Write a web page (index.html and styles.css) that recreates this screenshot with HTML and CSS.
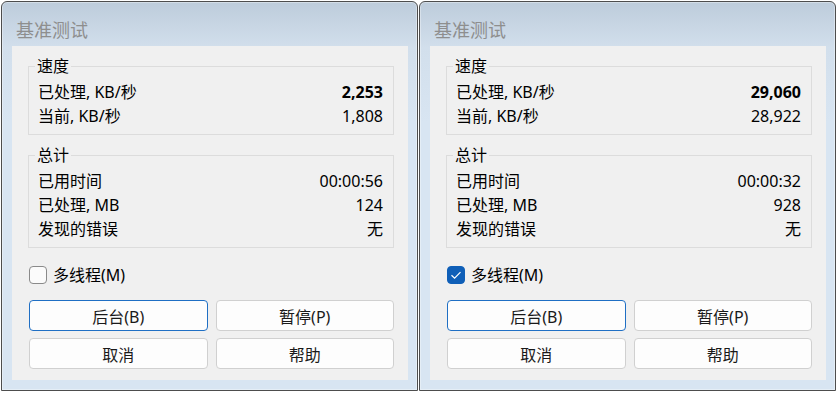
FILE: index.html
```html
<!DOCTYPE html>
<html lang="zh-CN">
<head>
    <meta charset="UTF-8">
    <meta name="viewport" content="width=device-width, initial-scale=1.0">
    <title>基准测试</title>
    <link rel="stylesheet" href="styles.css">
</head>
<body>
    <div class="desktop">
        <div class="window">
            <div class="title">基准测试</div>
            <div class="panel">
                <fieldset class="group">
                    <legend>速度</legend>
                    <div class="row"><span>已处理, KB/秒</span><b>2,253</b></div>
                    <div class="row"><span>当前, KB/秒</span><span>1,808</span></div>
                </fieldset>
                <fieldset class="group">
                    <legend>总计</legend>
                    <div class="row"><span>已用时间</span><span>00:00:56</span></div>
                    <div class="row"><span>已处理, MB</span><span>124</span></div>
                    <div class="row"><span>发现的错误</span><span>无</span></div>
                </fieldset>
                <label class="check"><span class="box"></span>多线程(M)</label>
                <div class="buttons">
                    <button class="default">后台(B)</button>
                    <button>暂停(P)</button>
                    <button>取消</button>
                    <button>帮助</button>
                </div>
            </div>
        </div>

        <div class="window">
            <div class="title">基准测试</div>
            <div class="panel">
                <fieldset class="group">
                    <legend>速度</legend>
                    <div class="row"><span>已处理, KB/秒</span><b>29,060</b></div>
                    <div class="row"><span>当前, KB/秒</span><span>28,922</span></div>
                </fieldset>
                <fieldset class="group">
                    <legend>总计</legend>
                    <div class="row"><span>已用时间</span><span>00:00:32</span></div>
                    <div class="row"><span>已处理, MB</span><span>928</span></div>
                    <div class="row"><span>发现的错误</span><span>无</span></div>
                </fieldset>
                <label class="check"><span class="box checked"><svg width="18" height="18" viewBox="0 0 18 18"><path d="M4.5 9.2 L7.6 12.2 L13.5 6.2" fill="none" stroke="#fff" stroke-width="1.2"/></svg></span>多线程(M)</label>
                <div class="buttons">
                    <button class="default">后台(B)</button>
                    <button>暂停(P)</button>
                    <button>取消</button>
                    <button>帮助</button>
                </div>
            </div>
        </div>
    </div>
</body>
</html>
```

FILE: styles.css
```css
body { margin: 0; background: #fff; font-family: "Noto Sans", "Noto Sans CJK SC", sans-serif; font-size: 16px; color: #000; }
.desktop { display: flex; gap: 1px; padding: 1px; }
.window { width: 417px; height: 390px; box-sizing: border-box; border: 1px solid #4d4d4d; border-radius: 6px 6px 0 0; padding: 0 9px 0 10px; background: linear-gradient(#bdccdb 0, #d2dfec 46px, #d8e5f2 120px); box-shadow: inset 0 0 0 1px rgba(255,255,255,.35); }
.title { height: 44px; display: flex; align-items: flex-end; padding: 0 0 4px 4px; box-sizing: border-box; line-height: 24px; font-size: 18px; color: #8e8e8e; }
.panel { display: flow-root; background: #f0f0f0; padding: 0 14px 11px 16px; }
.group { margin: 10px 0 0; padding: 4px 10px 6px 9px; border: 1px solid #dcdcdc; min-width: 0; }
.group legend { padding: 0 2px; margin-left: -3px; line-height: 20px; }
.row { display: flex; justify-content: space-between; line-height: 24px; height: 24px; }
.row b { font-weight: bold; }
.check { display: flex; align-items: center; gap: 6px; margin-top: 15px; height: 24px; line-height: 24px; }
.box { width: 18px; height: 18px; box-sizing: border-box; border: 1px solid #8a8a8a; border-radius: 4px; background: #fbfbfb; margin-left: 1px; }
.box.checked { border-color: #0f5fb8; background: #0f5fb8; }
.box svg { display: block; margin: -1px; }
.buttons { display: grid; grid-template-columns: 1fr 1fr; gap: 7px 8px; margin-top: 13px; padding-left: 1px; }
.buttons button { height: 31px; font: inherit; color: #1a1a1a; background: #fdfdfd; border: 1px solid #d0d0d0; border-radius: 4px; padding: 0; }
.buttons button.default { border-color: #1f6fc4; }
```
